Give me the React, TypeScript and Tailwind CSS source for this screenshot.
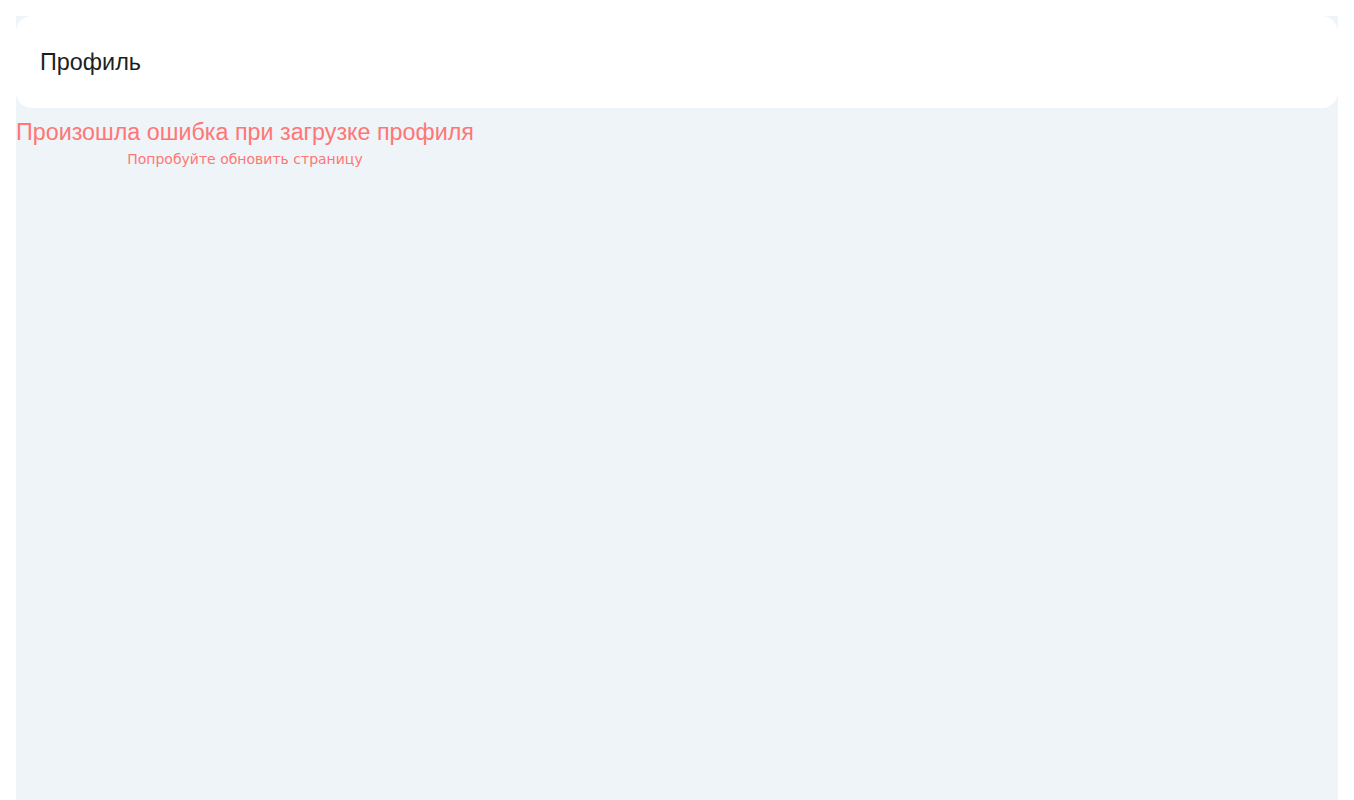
export default function App() {
  return (
    <div className="min-h-screen bg-white px-4 pt-4" style={{ fontFamily: '"Liberation Sans", Arial, sans-serif' }}>
      <div className="min-h-[784px] bg-[#eef4f7]">
        <div className="flex h-[92px] items-center rounded-2xl bg-white px-6 pt-0.5">
          <h1 className="text-[23.4px] leading-none text-[#1b1f22]">Профиль</h1>
        </div>
        <div className="mt-2.5 inline-flex flex-col items-center text-[#ff7676]">
          <p className="text-[23.3px] leading-[28px]">Произошла ошибка при загрузке профиля</p>
          <p className="mt-[3px] text-[14px] leading-[20px]" style={{ fontFamily: '"DejaVu Sans", Verdana, sans-serif' }}>
            Попробуйте обновить страницу
          </p>
        </div>
      </div>
    </div>
  );
}
